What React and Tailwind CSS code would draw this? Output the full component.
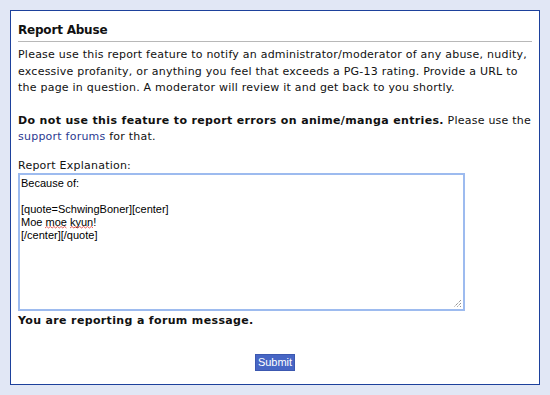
import React from "react";

const verdana = { fontFamily: '"DejaVu Sans", Verdana, sans-serif' };

const Squiggle = ({ children }) => (
  <span className="relative">
    {children}
    <svg className="absolute left-0 bottom-[-1px] w-full h-[3px]" preserveAspectRatio="none" viewBox="0 0 24 3">
      <path d="M0 2 L2 0.5 L4 2 L6 0.5 L8 2 L10 0.5 L12 2 L14 0.5 L16 2 L18 0.5 L20 2 L22 0.5 L24 2" fill="none" stroke="#e0332c" strokeWidth="0.8" />
    </svg>
  </span>
);

export default function App() {
  return (
    <div className="w-[550px] h-[395px] bg-[#e1e7f5] p-[10px]" style={verdana}>
      <div className="w-[530px] h-[375px] bg-white border border-[#1d419c] px-[7px] pt-[12px] text-[11px] leading-[16.5px] tracking-[0.23px] text-[#111]">
        <h1 className="text-[12px] tracking-[-0.2px] font-bold leading-[15px] pb-[3px] border-b border-[#b8b8b8] mb-[5px]">
          Report Abuse
        </h1>
        <p>
          Please use this report feature to notify an administrator/moderator of any abuse, nudity,
          excessive profanity, or anything you feel that exceeds a PG-13 rating. Provide a URL to
          the page in question. A moderator will review it and get back to you shortly.
        </p>
        <p className="mt-[16px]">
          <b className="tracking-[0.35px]">Do not use this feature to report errors on anime/manga entries.</b> Please use the{" "}
          <a href="#" className="text-[#2b3a91]">support forums</a> for that.
        </p>
        <div className="mt-[13px] leading-[14px]">Report Explanation:</div>
        <div
          className="relative w-[447px] h-[138px] border-2 border-[#9dbbef] px-[1px] pt-[2px] text-[11px] leading-[13px] tracking-normal text-black"
          style={{ fontFamily: '"Liberation Sans", Tahoma, sans-serif' }}
        >
          <div>Because of:</div>
          <div>&nbsp;</div>
          <div>[quote=SchwingBoner][center]</div>
          <div>
            Moe <Squiggle>moe</Squiggle> <Squiggle>kyun</Squiggle>!
          </div>
          <div>[/center][/quote]</div>
          <svg className="absolute right-[1px] bottom-[1px]" width="10" height="10" viewBox="0 0 10 10">
            <path d="M9 2 L2 9 M9 5 L5 9 M9 8 L8 9" stroke="#666" strokeWidth="1" strokeDasharray="1 1" />
          </svg>
        </div>
        <div className="font-bold mt-[2px] tracking-[0.35px]">You are reporting a forum message.</div>
        <div className="flex justify-center mt-[25px]">
          <button
            className="h-[17px] px-[2px] bg-[#4766c5] border border-[#3c58b0] text-white text-[11px] leading-[15px] tracking-normal"
            style={{ fontFamily: '"Liberation Sans", Tahoma, sans-serif' }}
          >
            Submit
          </button>
        </div>
      </div>
    </div>
  );
}
